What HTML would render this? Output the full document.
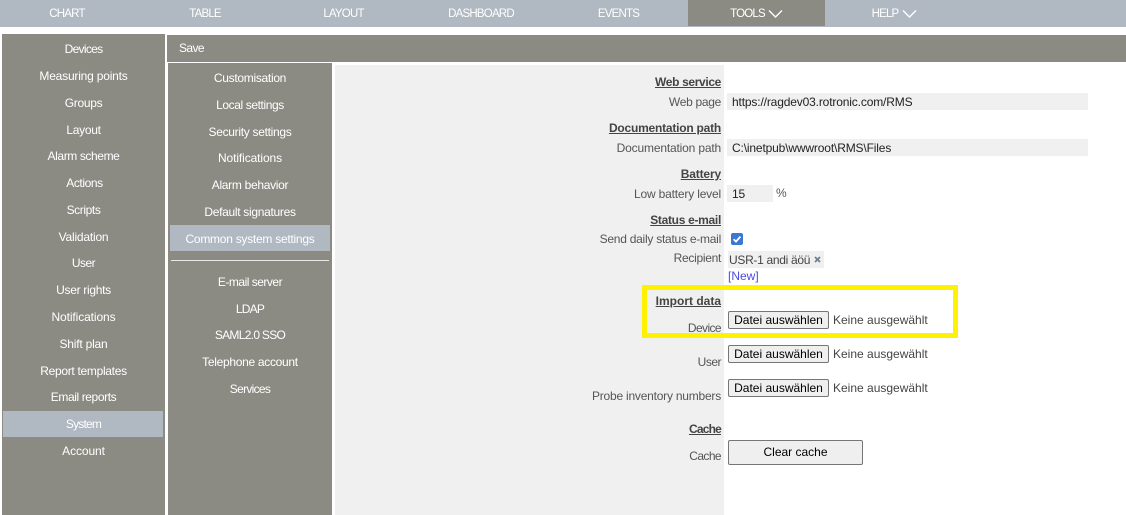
<!DOCTYPE html>
<html><head><meta charset="utf-8">
<style>
html,body{margin:0;padding:0;background:#fff;}
body{position:relative;width:1126px;height:515px;overflow:hidden;font-family:"Liberation Sans",sans-serif;font-size:12px;}
.b{position:absolute;}
.t{position:absolute;white-space:nowrap;line-height:16px;height:16px;}
.n{color:#fff;font-size:11.5px;letter-spacing:-.8px;transform:translate(-50%,-8px);}
.m{color:#fff;font-size:12px;transform:translate(-50%,-8px);}
.l{color:#555;font-size:12px;right:405px;transform:translateY(-8px);text-align:right;}
.h{color:#444;font-size:12px;font-weight:bold;text-decoration:underline;right:405px;transform:translateY(-8px);}
.v{color:#222;font-size:12px;letter-spacing:-.15px;transform:translateY(-8px);left:732px;}
.btn{position:absolute;box-sizing:border-box;left:728px;width:101px;height:18px;background:#efefef;border:1px solid #767676;border-radius:2px;color:#000;font-size:12px;line-height:16px;text-align:center;}
.nf{color:#444;font-size:12px;left:833px;transform:translateY(-8px);}
</style></head><body>
<div class="b" style="left:0;top:0;width:1126px;height:27px;background:#b0b8c2"></div>
<div class="b" style="left:688px;top:0;width:137px;height:26px;background:#8b8b84"></div>
<div class="t n" style="left:67px;top:14px">CHART</div>
<div class="t n" style="left:205px;top:14px">TABLE</div>
<div class="t n" style="left:343.5px;top:14px">LAYOUT</div>
<div class="t n" style="left:481px;top:14px">DASHBOARD</div>
<div class="t n" style="left:618.5px;top:14px">EVENTS</div>
<div class="t n" style="left:747.5px;top:14px">TOOLS</div>
<div class="t n" style="left:885px;top:14px">HELP</div>
<svg class="b" style="left:768px;top:9px" width="15" height="10" viewBox="0 0 15 10"><path d="M1 1.5L7.5 8L14 1.5" fill="none" stroke="#fff" stroke-width="1.4"/></svg>
<svg class="b" style="left:901.5px;top:9px" width="15" height="10" viewBox="0 0 15 10"><path d="M1 1.5L7.5 8L14 1.5" fill="none" stroke="#fff" stroke-width="1.4"/></svg>

<div class="b" style="left:2px;top:34px;width:163px;height:481px;background:#8b8b84"></div>
<div class="b" style="left:167px;top:35px;width:959px;height:27px;background:#8b8b84"></div>
<div class="b" style="left:168px;top:63px;width:164px;height:452px;background:#8b8b84"></div>
<div class="b" style="left:335px;top:65px;width:389px;height:450px;background:#f0f0f0"></div>
<div class="b" style="left:3px;top:411px;width:160px;height:26px;background:#b0b8c2"></div>
<div class="b" style="left:170px;top:225px;width:160px;height:26px;background:#b0b8c2"></div>
<div class="b" style="left:171px;top:260px;width:158px;height:1px;background:#e8e8e8"></div>

<div class="t" style="left:179px;top:40px;color:#fff;letter-spacing:-.6px">Save</div>

<div class="t m" style="left:83.5px;top:49px;letter-spacing:-.7px">Devices</div>
<div class="t m" style="left:83.5px;top:76px;letter-spacing:-.2px">Measuring points</div>
<div class="t m" style="left:83.5px;top:103px;letter-spacing:-.3px">Groups</div>
<div class="t m" style="left:83.5px;top:130px;letter-spacing:-.3px">Layout</div>
<div class="t m" style="left:83.5px;top:156px;letter-spacing:-.4px">Alarm scheme</div>
<div class="t m" style="left:84.5px;top:183px;letter-spacing:-.4px">Actions</div>
<div class="t m" style="left:83.5px;top:210px;letter-spacing:-.4px">Scripts</div>
<div class="t m" style="left:83.5px;top:237px;letter-spacing:-.2px">Validation</div>
<div class="t m" style="left:83.5px;top:263px;letter-spacing:-.5px">User</div>
<div class="t m" style="left:83.5px;top:290px;letter-spacing:-.3px">User rights</div>
<div class="t m" style="left:83.5px;top:317px;letter-spacing:-.1px">Notifications</div>
<div class="t m" style="left:83.5px;top:344px;letter-spacing:-.2px">Shift plan</div>
<div class="t m" style="left:83.5px;top:371px;letter-spacing:-.3px">Report templates</div>
<div class="t m" style="left:83.5px;top:397px;letter-spacing:-.4px">Email reports</div>
<div class="t m" style="left:83.5px;top:424px;letter-spacing:-.8px">System</div>
<div class="t m" style="left:83.5px;top:451px;letter-spacing:-.1px">Account</div>

<div class="t m" style="left:250px;top:78px;letter-spacing:-.3px">Customisation</div>
<div class="t m" style="left:250px;top:105px;letter-spacing:-.4px">Local settings</div>
<div class="t m" style="left:250px;top:132px;letter-spacing:-.3px">Security settings</div>
<div class="t m" style="left:250px;top:158px;letter-spacing:-.1px">Notifications</div>
<div class="t m" style="left:250px;top:185px;letter-spacing:-.3px">Alarm behavior</div>
<div class="t m" style="left:250px;top:212px;letter-spacing:-.3px">Default signatures</div>
<div class="t m" style="left:250px;top:239px;letter-spacing:-.26px">Common system settings</div>
<div class="t m" style="left:250px;top:282px;letter-spacing:-.5px">E-mail server</div>
<div class="t m" style="left:250px;top:309px;letter-spacing:-.8px">LDAP</div>
<div class="t m" style="left:250px;top:335px;letter-spacing:-.7px">SAML2.0 SSO</div>
<div class="t m" style="left:250px;top:362px;letter-spacing:-.3px">Telephone account</div>
<div class="t m" style="left:250px;top:389px;letter-spacing:-.7px">Services</div>

<div class="t h" style="top:82px;letter-spacing:-.35px">Web service</div>
<div class="t l" style="top:102px;letter-spacing:-.3px">Web page</div>
<div class="b" style="left:727px;top:93px;width:361px;height:17px;background:#f0f0f0"></div>
<div class="t v" style="top:102px">https://ragdev03.rotronic.com/RMS</div>

<div class="t h" style="top:128px;letter-spacing:-.22px">Documentation path</div>
<div class="t l" style="top:148px;letter-spacing:-.17px">Documentation path</div>
<div class="b" style="left:727px;top:139px;width:361px;height:17px;background:#f0f0f0"></div>
<div class="t v" style="top:148px">C:\inetpub\wwwroot\RMS\Files</div>

<div class="t h" style="top:174px;letter-spacing:-.15px">Battery</div>
<div class="t l" style="top:194px;letter-spacing:-.18px">Low battery level</div>
<div class="b" style="left:727px;top:185px;width:46px;height:17px;background:#f0f0f0"></div>
<div class="t v" style="top:194px">15</div>
<div class="t" style="left:776px;top:185px;color:#555">%</div>

<div class="t h" style="top:220px;letter-spacing:-.3px">Status e-mail</div>
<div class="t l" style="top:239px;letter-spacing:-.25px">Send daily status e-mail</div>
<svg class="b" style="left:731px;top:233px" width="12" height="12" viewBox="0 0 12 12"><rect width="12" height="12" rx="2" fill="#3b78d4"/><path d="M2.6 6.2L5 8.6L9.4 3.6" fill="none" stroke="#fff" stroke-width="1.8"/></svg>
<div class="t l" style="top:258px;letter-spacing:-.3px">Recipient</div>
<div class="b" style="left:728px;top:251px;width:96px;height:17px;background:#f0f0f0"></div>
<div class="t" style="left:729px;top:252px;color:#444;letter-spacing:-.3px">USR-1 andi äöü</div>
<svg class="b" style="left:814px;top:256px" width="7" height="7" viewBox="0 0 7 7"><path d="M1 1L6 6M6 1L1 6" stroke="#6f7f92" stroke-width="1.8"/></svg>
<div class="t" style="left:728px;top:268px;color:#4a4ae0">[New]</div>

<div class="b" style="left:642px;top:285px;width:316px;height:53px;box-sizing:border-box;border:5px solid #fff200"></div>
<div class="t h" style="top:301px">Import data</div>
<div class="t l" style="top:328px;letter-spacing:-.6px">Device</div>
<div class="btn" style="top:311px">Datei auswählen</div>
<div class="t nf" style="top:320px">Keine ausgewählt</div>

<div class="t l" style="top:362px;letter-spacing:-.5px">User</div>
<div class="btn" style="top:345px">Datei auswählen</div>
<div class="t nf" style="top:354px">Keine ausgewählt</div>

<div class="t l" style="top:396px;letter-spacing:-.22px">Probe inventory numbers</div>
<div class="btn" style="top:379px">Datei auswählen</div>
<div class="t nf" style="top:388px">Keine ausgewählt</div>

<div class="t h" style="top:429px;letter-spacing:-.8px">Cache</div>
<div class="t l" style="top:456px;letter-spacing:-.6px">Cache</div>
<div class="btn" style="top:440px;width:135px;height:25px;line-height:22px">Clear cache</div>
</body></html>
